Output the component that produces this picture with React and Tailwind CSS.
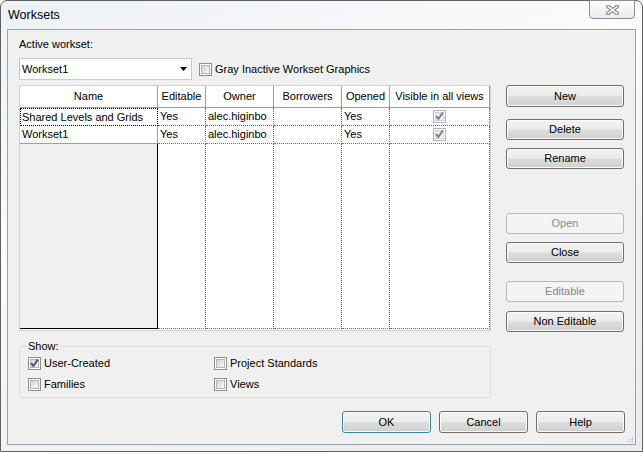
import clsx from 'clsx';

const Check = ({ checked, dim }) => (
  <span
    className={clsx(
      'relative inline-flex w-[13px] h-[13px] shrink-0 items-center justify-center border bg-white',
      dim ? 'border-[#b4b4b4]' : 'border-[#8e8f8f]'
    )}
  >
    <span
      className={clsx(
        'w-[9px] h-[9px] border',
        dim
          ? 'border-[#d0d3d7] bg-[linear-gradient(135deg,#e6e6e6,#f8f8f8)]'
          : 'border-[#b1b5ba] bg-[linear-gradient(135deg,#d3d6da,#f6f6f6)]'
      )}
    />
    {checked && (
      <svg className="absolute left-0 top-0" width="11" height="11" viewBox="0 0 11 11">
        <path
          d="M2.2 5.2 L4.4 8 L8.8 1.6"
          fill="none"
          stroke={dim ? '#6f7fa3' : '#3f5484'}
          strokeWidth="1.9"
        />
      </svg>
    )}
  </span>
);

const Btn = ({ children, disabled, primary, className }) => (
  <div
    className={clsx(
      'flex items-center justify-center rounded-[3px] border',
      disabled
        ? 'border-[#b5b9bc] bg-[#f4f4f4] text-[#8a8a8a]'
        : 'bg-[linear-gradient(to_bottom,#f3f3f3_0%,#ebebeb_48%,#dddddd_52%,#d0d0d0_100%)] shadow-[inset_0_0_0_1px_#fbfbfb] text-black',
      !disabled && (primary ? 'border-[#3c7fb1]' : 'border-[#707070]'),
      className
    )}
  >
    {children}
  </div>
);

const columns = [
  { name: 'Name', w: 'w-[138px]', cells: ['Shared Levels and Grids', 'Workset1'] },
  { name: 'Editable', w: 'w-[48px]', cells: ['Yes', 'Yes'] },
  { name: 'Owner', w: 'w-[68px]', cells: ['alec.higinbo', 'alec.higinbo'] },
  { name: 'Borrowers', w: 'w-[68px]', cells: ['', ''] },
  { name: 'Opened', w: 'w-[48px]', cells: ['Yes', 'Yes'] },
  { name: 'Visible in all views', w: 'w-[100px]', cells: ['check', 'check'] },
];

const NameColumn = ({ col }) => (
  <div className={clsx('flex flex-col', col.w)}>
    <div className="h-[22px] shrink-0 border-r border-b border-[#a0a0a0] flex items-center justify-center">
      {col.name}
    </div>
    <div className="h-[18px] shrink-0 border border-dotted border-black pl-[1px] flex items-center whitespace-nowrap overflow-hidden">
      {col.cells[0]}
    </div>
    <div className="h-[18px] shrink-0 border-r border-b border-[#a0a0a0] pl-[2px] flex items-center whitespace-nowrap overflow-hidden">
      {col.cells[1]}
    </div>
    <div className="flex-1 bg-[#f0f0f0] border-r border-b border-black" />
  </div>
);

const DataColumn = ({ col }) => (
  <div className={clsx('flex flex-col', col.w)}>
    <div className="h-[22px] shrink-0 border-r border-b border-[#a0a0a0] flex items-center justify-center whitespace-nowrap">
      {col.name}
    </div>
    {col.cells.map((c, i) => (
      <div
        key={i}
        className={clsx(
          'h-[18px] shrink-0 border-r border-b border-dotted border-[#6e6e6e] flex items-center whitespace-nowrap overflow-hidden',
          c === 'check' ? 'justify-center' : 'pl-[2px]'
        )}
      >
        {c === 'check' ? <Check checked dim /> : c}
      </div>
    ))}
    <div className="flex-1 border-r border-b border-dotted border-[#6e6e6e]" />
  </div>
);

export default function App() {
  return (
    <div className="w-[643px] h-[452px] bg-white overflow-hidden font-['Liberation_Sans',Arial,sans-serif] text-[11px] text-black">
      <div className="w-full h-full flex flex-col rounded-t-[7px] border border-[#5e6166] bg-[linear-gradient(160deg,#eef1f5_0%,#fbfcfd_40%,#f1f3f6_60%,#e8ecf1_100%)]">
        {/* title bar */}
        <div className="h-[28px] shrink-0 flex items-start justify-between">
          <div className="pl-[7px] pt-[6px] text-[12.5px] leading-[16px]">Worksets</div>
          <div className="-mt-[1px] mr-[7px] w-[46px] h-[19px] rounded-b-[4px] border border-[#8c8f94] bg-[linear-gradient(to_bottom,#fdfdfd,#e9ebee)] flex items-center justify-center">
            <svg width="13" height="10" viewBox="0 0 13 10">
              <path d="M2 1.5 L11 8.5 M11 1.5 L2 8.5" stroke="#7d7f82" strokeWidth="3.6" strokeLinecap="square" />
              <path d="M2 1.5 L11 8.5 M11 1.5 L2 8.5" stroke="#f4f4f4" strokeWidth="1.6" strokeLinecap="square" />
            </svg>
          </div>
        </div>

        {/* client area */}
        <div className="relative h-[416px] mx-[6px] border border-[#9da1a6] bg-[#f0f0f0] flex flex-col pl-[11px] pr-[10px]">
          <div className="flex gap-[15px]">
            <div className="w-[472px] flex flex-col pt-[7px]">
              <div className="h-[15px] leading-[15px]">Active workset:</div>
              <div className="mt-[6px] h-[22px] flex items-center">
                <div className="w-[173px] h-[22px] border border-[#c7c9cc] bg-white flex items-center justify-between pl-[2px] pr-[4px]">
                  <span>Workset1</span>
                  <svg width="7" height="4" viewBox="0 0 7 4">
                    <path d="M0 0 H7 L3.5 4 Z" fill="#000" />
                  </svg>
                </div>
                <div className="ml-[7px] flex items-center gap-[3px]">
                  <Check />
                  <span>Gray Inactive Workset Graphics</span>
                </div>
              </div>

              {/* worksets grid */}
              <div className="mt-[5px] h-[246px] border border-[#cfd1d4] bg-white flex pb-[1px]">
                {columns.map((col, i) =>
                  i === 0 ? <NameColumn key={col.name} col={col} /> : <DataColumn key={col.name} col={col} />
                )}
              </div>

              {/* show group */}
              <div className="relative mt-[15px] h-[52px] rounded-[3px] border border-[#d5dfe5] grid grid-cols-[186px_1fr] gap-y-[8px] content-start pl-[8px] pt-[10px]">
                <span className="absolute left-[7px] -top-[8px] px-[1px] bg-[#f0f0f0] leading-[15px]">Show:</span>
                <div className="flex items-center gap-[3px] h-[13px]">
                  <Check checked />
                  <span>User-Created</span>
                </div>
                <div className="flex items-center gap-[3px] h-[13px]">
                  <Check />
                  <span>Project Standards</span>
                </div>
                <div className="flex items-center gap-[3px] h-[13px]">
                  <Check />
                  <span>Families</span>
                </div>
                <div className="flex items-center gap-[3px] h-[13px]">
                  <Check />
                  <span>Views</span>
                </div>
              </div>
            </div>

            {/* side buttons */}
            <div className="w-[118px] flex flex-col pt-[55px]">
              <Btn className="h-[22px]">New</Btn>
              <Btn className="h-[21px] mt-[12px]">Delete</Btn>
              <Btn className="h-[21px] mt-[8px]">Rename</Btn>
              <Btn disabled className="h-[21px] mt-[44px]">Open</Btn>
              <Btn className="h-[21px] mt-[8px]">Close</Btn>
              <Btn disabled className="h-[21px] mt-[18px]">Editable</Btn>
              <Btn className="h-[21px] mt-[9px]">Non Editable</Btn>
            </div>
          </div>

          {/* dialog buttons */}
          <div className="mt-[13px] flex justify-end gap-[8px]">
            <Btn primary className="w-[89px] h-[22px]">OK</Btn>
            <Btn className="w-[89px] h-[22px]">Cancel</Btn>
            <Btn className="w-[89px] h-[22px]">Help</Btn>
          </div>

          <svg className="absolute right-[1px] bottom-[1px]" width="8" height="8" viewBox="0 0 8 8">
            <rect x="6" y="2" width="1" height="1" fill="#a8acb1" />
            <rect x="4" y="4" width="1" height="1" fill="#a8acb1" />
            <rect x="6" y="4" width="1" height="1" fill="#a8acb1" />
            <rect x="2" y="6" width="1" height="1" fill="#a8acb1" />
            <rect x="4" y="6" width="1" height="1" fill="#a8acb1" />
            <rect x="6" y="6" width="1" height="1" fill="#a8acb1" />
          </svg>
        </div>
      </div>
    </div>
  );
}
